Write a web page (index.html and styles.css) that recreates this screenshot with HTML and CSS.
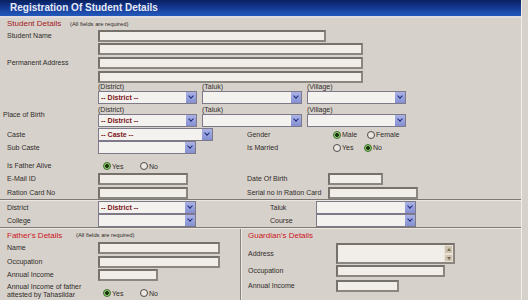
FILE: index.html
```html
<!DOCTYPE html>
<html>
<head>
<meta charset="utf-8">
<title>Registration Of Student Details</title>
<link rel="stylesheet" href="styles.css">
</head>
<body>
<div class="win">
  <div class="titlebar">Registration Of Student Details</div>

  <div class="student">
    <div class="head">
      <span class="sectitle st1">Student Details</span>
      <span class="note">(All fields are required)</span>
    </div>

    <div class="frow r-name">
      <label class="lbl">Student Name</label>
      <div class="stack">
        <span class="tb w228"></span>
        <span class="tb w265"></span>
      </div>
    </div>

    <div class="frow r-addr">
      <label class="lbl">Permanent Address</label>
      <div class="stack gap2">
        <span class="tb w265"></span>
        <span class="tb w265"></span>
      </div>
    </div>

    <div class="frow r-loc1">
      <span class="lbl"></span>
      <div class="loc">
        <div class="subs sub1"><span>(District)</span><span>(Taluk)</span><span>(Village)</span></div>
        <div class="sels">
          <span class="sel w99"><span class="val">-- District --</span><i class="arr"></i></span>
          <span class="sel w100"><span class="val"></span><i class="arr"></i></span>
          <span class="sel w99"><span class="val"></span><i class="arr"></i></span>
        </div>
      </div>
    </div>

    <div class="frow r-loc2">
      <label class="lbl pob">Place of Birth</label>
      <div class="loc">
        <div class="subs sub2"><span>(District)</span><span>(Taluk)</span><span>(Village)</span></div>
        <div class="sels">
          <span class="sel w99"><span class="val">-- District --</span><i class="arr"></i></span>
          <span class="sel w100"><span class="val"></span><i class="arr"></i></span>
          <span class="sel w99"><span class="val"></span><i class="arr"></i></span>
        </div>
      </div>
    </div>

    <div class="grow r-caste">
      <label class="lbl">Caste</label>
      <div><span class="sel w115"><span class="val">-- Caste --</span><i class="arr"></i></span></div>
      <label class="lbl">Gender</label>
      <div class="rg"><span class="opt o34"><i class="rd on"></i>Male</span><span class="opt"><i class="rd"></i>Female</span></div>
    </div>

    <div class="grow r-sub">
      <label class="lbl">Sub Caste</label>
      <div><span class="sel w98"><span class="val"></span><i class="arr"></i></span></div>
      <label class="lbl">Is Married</label>
      <div class="rg"><span class="opt o31"><i class="rd"></i>Yes</span><span class="opt"><i class="rd on"></i>No</span></div>
    </div>

    <div class="grow r-alive">
      <label class="lbl">Is Father Alive</label>
      <div class="rg"><span class="opt o37"><i class="rd on"></i>Yes</span><span class="opt"><i class="rd"></i>No</span></div>
    </div>

    <div class="grow r-mail">
      <label class="lbl">E-Mail ID</label>
      <div><span class="tb w90"></span></div>
      <label class="lbl">Date Of Birth</label>
      <div><span class="tb w55"></span></div>
    </div>

    <div class="grow r-ration">
      <label class="lbl">Ration Card No</label>
      <div><span class="tb w90"></span></div>
      <label class="lbl">Serial no in Ration Card</label>
      <div><span class="tb w90"></span></div>
    </div>
  </div>

  <div class="sep"></div>

  <div class="college">
    <div class="grow2">
      <label class="lbl">District</label>
      <div><span class="sel w98"><span class="val">-- District --</span><i class="arr"></i></span></div>
      <label class="lbl">Taluk</label>
      <div><span class="sel w100"><span class="val"></span><i class="arr"></i></span></div>
    </div>
    <div class="grow2">
      <label class="lbl">College</label>
      <div><span class="sel w98"><span class="val"></span><i class="arr"></i></span></div>
      <label class="lbl">Course</label>
      <div><span class="sel w100"><span class="val"></span><i class="arr"></i></span></div>
    </div>
  </div>

  <div class="sep"></div>

  <div class="bottom">
    <div class="father">
      <div class="head hb">
        <span class="sectitle st2">Father's Details</span>
        <span class="note">(All fields are required)</span>
      </div>
      <div class="frow f-name"><label class="lbl">Name</label><span class="tb w122"></span></div>
      <div class="frow f-occ"><label class="lbl">Occupation</label><span class="tb w122"></span></div>
      <div class="frow f-inc"><label class="lbl">Annual Income</label><span class="tb w60"></span></div>
      <div class="frow f-att">
        <label class="lbl two">Annual Income of father<br>attested by Tahasildar</label>
        <div class="rg att"><span class="opt o37"><i class="rd on"></i>Yes</span><span class="opt"><i class="rd"></i>No</span></div>
      </div>
    </div>
    <div class="guard">
      <div class="head hb"><span class="sectitle st2">Guardian's Details</span></div>
      <div class="grow3 g-addr">
        <label class="lbl">Address</label>
        <div class="ta">
          <span class="ta-in"></span>
          <span class="sb"><i class="sbb up"></i><i class="sbb dn"></i></span>
        </div>
      </div>
      <div class="grow3 g-occ"><label class="lbl">Occupation</label><span class="tb w109"></span></div>
      <div class="grow3 g-inc"><label class="lbl">Annual Income</label><span class="tb w63"></span></div>
    </div>
  </div>
</div>
</body>
</html>
```

FILE: styles.css
```css
* { box-sizing: border-box; margin: 0; padding: 0; }

html, body { background: #d7d1cb; }

body {
  width: 528px;
  height: 300px;
  overflow: hidden;
  font-family: "Liberation Sans", Arial, sans-serif;
  font-size: 7px;
  color: #2f2c2a;
}

.win {
  width: 522px;
  height: 300px;
  background: #d7d1cb;
  border-right: 1px solid #f1ede8;
}

.titlebar {
  height: 18px;
  padding-left: 10px;
  font-size: 10px;
  font-weight: bold;
  line-height: 16px;
  color: #e4eaf6;
  background: linear-gradient(#08205e 0%, #143790 45%, #1f52b2 85%, #2358b8 100%);
  border-bottom: 2px solid #dedbe0;
}

/* ---------- generic ---------- */
.student { padding-left: 7px; }

.head {
  display: flex;
  align-items: center;
  height: 11px;
}
.hb { height: 12px; }

.sectitle { font-size: 8px; }
.st1 { width: 63px; color: #a3181c; }
.st2 { width: 69px; color: #cc151c; }
.note { font-size: 5.8px; color: #2f2c2a; }

.lbl { display: block; line-height: 12px; white-space: nowrap; }
.lbl.two { line-height: 8px; padding-top: 2px; }
.lbl.pob { text-indent: -4px; padding-top: 5px; }

.frow { display: flex; }
.frow > .lbl { width: 91px; flex: none; }

.stack { display: flex; flex-direction: column; gap: 1px; }
.stack.gap2 { gap: 2px; }

.grow {
  display: grid;
  grid-template-columns: 91px 149px 81px 1fr;
  align-items: center;
}
.grow2 {
  display: grid;
  grid-template-columns: 91px 172px 46px 1fr;
  align-items: center;
  height: 13px;
}
.grow3 {
  display: grid;
  grid-template-columns: 88px 1fr;
  align-items: center;
}

/* ---------- text boxes ---------- */
.tb {
  display: block;
  height: 12px;
  background: #f1eeea;
  border: 2px solid #77716c;
  border-right-color: #8c8680;
  border-bottom-color: #8c8680;
}
.w228 { width: 228px; }
.w265 { width: 265px; }
.w90 { width: 90px; }
.w55 { width: 55px; }
.w122 { width: 122px; }
.w60 { width: 60px; }
.w109 { width: 109px; }
.w63 { width: 63px; }

/* ---------- selects ---------- */
.sel {
  display: flex;
  align-items: center;
  height: 13px;
  background: #f4f2ef;
  border: 1px solid #7d7988;
}
.w98 { width: 98px; }
.w99 { width: 99px; }
.w100 { width: 100px; }
.w115 { width: 115px; }

.val {
  flex: 1;
  padding-left: 2px;
  font-weight: bold;
  color: #7c1619;
  white-space: nowrap;
}
.arr {
  position: relative;
  flex: none;
  width: 10px;
  height: 11px;
  background: linear-gradient(#aab2e6, #8490d2);
}
.arr::after {
  content: "";
  position: absolute;
  left: 3px;
  top: 2px;
  width: 3px;
  height: 3px;
  border-right: 1.5px solid #1b2a78;
  border-bottom: 1.5px solid #1b2a78;
  transform: rotate(45deg);
}

.loc { display: flex; flex-direction: column; }
.subs { display: flex; gap: 5px; align-items: flex-end; }
.subs span:nth-child(1) { width: 99px; }
.subs span:nth-child(2) { width: 100px; }
.subs span:nth-child(3) { width: 99px; }
.sub1 { height: 8px; line-height: 8px; }
.sub2 { height: 10px; line-height: 9px; }
.sels { display: flex; gap: 5px; }

/* ---------- radios ---------- */
.rg { display: flex; align-items: center; padding-left: 5px; height: 12px; }
.opt { display: inline-flex; align-items: center; gap: 1px; }
.o34 { width: 34px; }
.o31 { width: 31px; }
.o37 { width: 37px; }
.rd {
  display: inline-block;
  width: 8px;
  height: 8px;
  border-radius: 50%;
  border: 1px solid #4e4b48;
  background: #ebe8e3;
}
.rd.on {
  border-color: #3f6c2c;
  background: radial-gradient(circle, #1d3410 0 1.6px, #8ccf6c 2.2px);
}

/* ---------- row positions ---------- */
.r-name { margin-top: 1px; }
.r-addr { margin-top: 2px; }
.r-caste { margin-top: 1px; height: 13px; }
.r-sub { height: 13px; }
.r-alive { margin-top: 6px; height: 12px; }
.r-mail { margin-top: 1px; height: 12px; }
.r-ration { margin-top: 2px; height: 12px; }

.sep {
  height: 2px;
  border-top: 1px solid #7f7975;
  border-bottom: 1px solid #ebe7e2;
}

.college { padding-left: 7px; }

/* ---------- bottom panels ---------- */
.bottom { display: flex; height: 71px; }
.father {
  width: 241px;
  padding-left: 7px;
  border-right: 1px solid #88827d;
}
.guard {
  flex: 1;
  padding-left: 6px;
  border-left: 1px solid #ece8e3;
}

.f-name { margin-top: 1px; }
.f-occ { margin-top: 2px; }
.f-inc { margin-top: 1px; }
.f-att { margin-top: 0; height: 18px; }
.rg.att { align-self: flex-end; margin-top: 6px; }

.g-addr { margin-top: 2px; }
.g-occ { margin-top: 1px; }
.g-inc { margin-top: 3px; }

.ta {
  display: flex;
  width: 119px;
  height: 21px;
  border: 2px solid #77716c;
  border-right-color: #8c8680;
  border-bottom-color: #8c8680;
  background: #f1eeea;
}
.ta-in { flex: 1; }
.sb {
  display: flex;
  flex-direction: column;
  width: 9px;
  background: #ddd6ca;
}
.sbb {
  position: relative;
  flex: 1;
  background: #cdc3b0;
  border: 1px solid #e8e2d6;
}
.sbb::after {
  content: "";
  position: absolute;
  left: 1.5px;
  width: 0;
  height: 0;
  border-left: 2.5px solid transparent;
  border-right: 2.5px solid transparent;
}
.sbb.up::after { top: 2px; border-bottom: 3px solid #7a6b55; }
.sbb.dn::after { top: 2px; border-top: 3px solid #7a6b55; }
```
